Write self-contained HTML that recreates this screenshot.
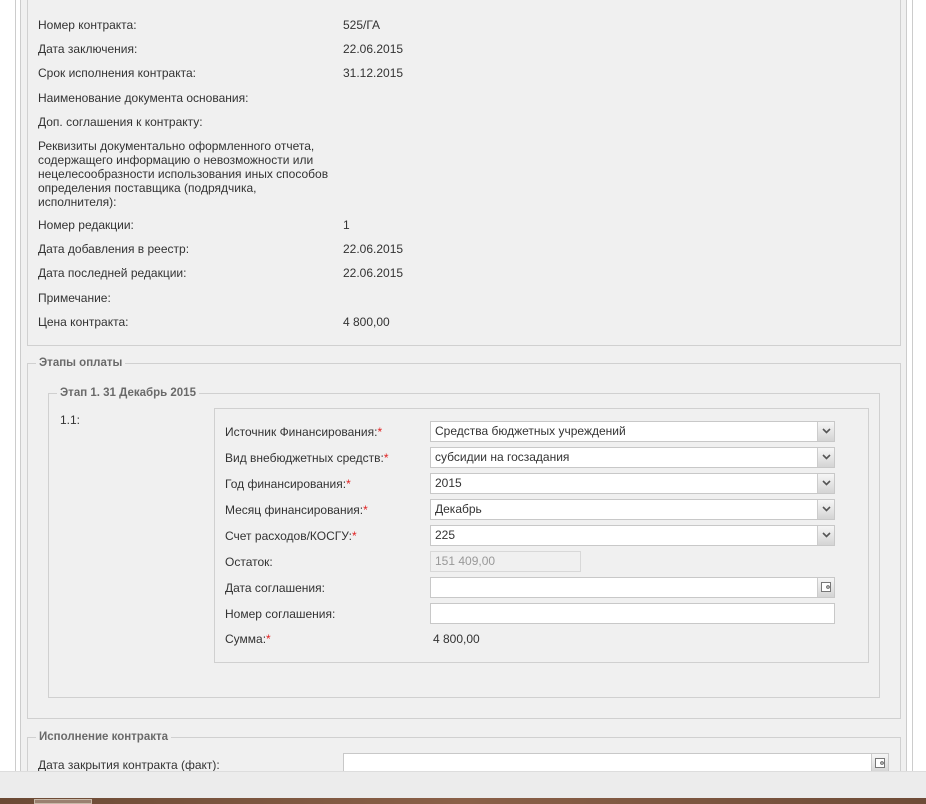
<!DOCTYPE html><html><head><meta charset="utf-8"><style>
*{box-sizing:border-box}
body{margin:0;width:926px;height:804px;overflow:hidden;background:#fff;font-family:"Liberation Sans","DejaVu Sans",sans-serif;font-size:12px;color:#333;position:relative}
.a{position:absolute}
.t{position:absolute;white-space:nowrap}
.fs{position:absolute;border:1px solid #d0d0d0}
.lg{position:absolute;background:#f0f0f0;padding:0 3px;font-weight:bold;color:#6a6a6a;font-size:11.5px;top:-7px;left:8px}
.in{position:absolute;height:21px;background:#fff;border:1px solid #c8c8c8;padding:2px 4px;font-size:12px;line-height:15px}
.btn{position:absolute;right:0;top:0;width:17px;height:19px;background:linear-gradient(#f6f6f6,#d4d4d4);border-left:1px solid #ccc}
.btn svg{position:absolute;left:4px;top:6px}
.r{color:#e02020}
</style></head><body>
<div class="a" style="left:15px;top:0;width:1px;height:771px;background:#ccc"></div>
<div class="a" style="left:20px;top:0;width:887px;height:771px;background:#f0f0f0;border-left:1px solid #ccc;border-right:1px solid #ccc"></div>
<div class="a" style="left:912px;top:0;width:1px;height:771px;background:#ccc"></div>

<div class="fs" style="left:27px;top:-10px;width:874px;height:356px"></div>
<div class="t" style="left:38px;top:18px">Номер контракта:</div><div class="t" style="left:343px;top:18px">525/ГА</div>
<div class="t" style="left:38px;top:42px">Дата заключения:</div><div class="t" style="left:343px;top:42px">22.06.2015</div>
<div class="t" style="left:38px;top:66px">Срок исполнения контракта:</div><div class="t" style="left:343px;top:66px">31.12.2015</div>
<div class="t" style="left:38px;top:91px">Наименование документа основания:</div>
<div class="t" style="left:38px;top:115px">Доп. соглашения к контракту:</div>
<div class="t" style="left:38px;top:139px;line-height:14px">Реквизиты документально оформленного отчета,<br>содержащего информацию о невозможности или<br>нецелесообразности использования иных способов<br>определения поставщика (подрядчика,<br>исполнителя):</div>
<div class="t" style="left:38px;top:218px">Номер редакции:</div><div class="t" style="left:343px;top:218px">1</div>
<div class="t" style="left:38px;top:242px">Дата добавления в реестр:</div><div class="t" style="left:343px;top:242px">22.06.2015</div>
<div class="t" style="left:38px;top:266px">Дата последней редакции:</div><div class="t" style="left:343px;top:266px">22.06.2015</div>
<div class="t" style="left:38px;top:291px">Примечание:</div>
<div class="t" style="left:38px;top:315px">Цена контракта:</div><div class="t" style="left:343px;top:315px">4 800,00</div>

<div class="fs" style="left:27px;top:363px;width:874px;height:356px"><div class="lg">Этапы оплаты</div></div>
<div class="fs" style="left:48px;top:393px;width:832px;height:305px"><div class="lg">Этап 1. 31 Декабрь 2015</div></div>
<div class="t" style="left:60px;top:413px">1.1:</div>
<div class="fs" style="left:214px;top:408px;width:655px;height:255px"></div>
<div class="t" style="left:225px;top:425px">Источник Финансирования:<span class="r">*</span></div>
<div class="in" style="left:430px;top:421px;width:405px">Средства бюджетных учреждений<div class="btn"><svg width="9" height="6"><path d="M1 1L4.5 4.5L8 1" stroke="#555" stroke-width="1.6" fill="none"/></svg></div></div>
<div class="t" style="left:225px;top:451px">Вид внебюджетных средств:<span class="r">*</span></div>
<div class="in" style="left:430px;top:447px;width:405px">субсидии на госзадания<div class="btn"><svg width="9" height="6"><path d="M1 1L4.5 4.5L8 1" stroke="#555" stroke-width="1.6" fill="none"/></svg></div></div>
<div class="t" style="left:225px;top:477px">Год финансирования:<span class="r">*</span></div>
<div class="in" style="left:430px;top:473px;width:405px">2015<div class="btn"><svg width="9" height="6"><path d="M1 1L4.5 4.5L8 1" stroke="#555" stroke-width="1.6" fill="none"/></svg></div></div>
<div class="t" style="left:225px;top:503px">Месяц финансирования:<span class="r">*</span></div>
<div class="in" style="left:430px;top:499px;width:405px">Декабрь<div class="btn"><svg width="9" height="6"><path d="M1 1L4.5 4.5L8 1" stroke="#555" stroke-width="1.6" fill="none"/></svg></div></div>
<div class="t" style="left:225px;top:529px">Счет расходов/КОСГУ:<span class="r">*</span></div>
<div class="in" style="left:430px;top:525px;width:405px">225<div class="btn"><svg width="9" height="6"><path d="M1 1L4.5 4.5L8 1" stroke="#555" stroke-width="1.6" fill="none"/></svg></div></div>
<div class="t" style="left:225px;top:555px">Остаток:</div>
<div class="in" style="left:430px;top:551px;width:151px;background:#f0f0f0;color:#999;border-color:#d8d8d8">151 409,00</div>
<div class="t" style="left:225px;top:581px">Дата соглашения:</div>
<div class="in" style="left:430px;top:577px;width:405px"><div class="btn"><svg width="10" height="10" style="left:3px;top:4px"><rect x="0.5" y="0.5" width="9" height="9" fill="#fff" stroke="#777"/><circle cx="7" cy="5" r="1.3" fill="none" stroke="#555"/></svg></div></div>
<div class="t" style="left:225px;top:607px">Номер соглашения:</div>
<div class="in" style="left:430px;top:603px;width:405px"></div>
<div class="t" style="left:225px;top:632px">Сумма:<span class="r">*</span></div>
<div class="t" style="left:433px;top:632px">4 800,00</div>

<div class="fs" style="left:27px;top:737px;width:874px;height:60px"><div class="lg">Исполнение контракта</div></div>
<div class="t" style="left:38px;top:758px">Дата закрытия контракта (факт):</div>
<div class="in" style="left:343px;top:753px;width:546px"><div class="btn"><svg width="10" height="10" style="left:3px;top:4px"><rect x="0.5" y="0.5" width="9" height="9" fill="#fff" stroke="#777"/><circle cx="7" cy="5" r="1.3" fill="none" stroke="#555"/></svg></div></div>

<div class="a" style="left:0;top:771px;width:926px;height:27px;background:#ececec;border-top:1px solid #ddd"></div>
<div class="a" style="left:0;top:798px;width:926px;height:6px;background:linear-gradient(90deg,#6b4a35,#8a6048,#6e4c38)"></div>
<div class="a" style="left:34px;top:799px;width:58px;height:5px;background:#9a8070;border:1px solid #c8b8a8"></div>
</body></html>
